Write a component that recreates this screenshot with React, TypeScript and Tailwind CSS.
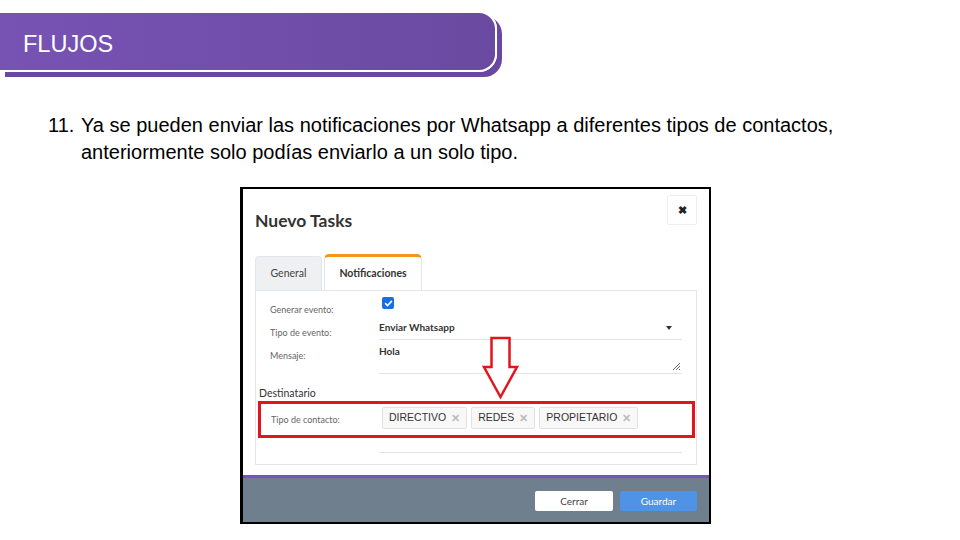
import React from "react";

const modalFont = { fontFamily: "Lato, 'Open Sans', sans-serif" };

function Chip({ label }: { label: string }) {
  return (
    <div className="flex h-[22px] items-center gap-[5px] rounded-[2px] border border-[#e2e2e2] bg-[#f8f8f8] px-[6px] font-['Liberation_Sans',Arial,sans-serif] text-[10.5px] text-[#333]">
      <span>{label}</span>
      <span className="text-[11px] font-bold leading-none text-[#bdbdbd]">✕</span>
    </div>
  );
}

export default function App() {
  return (
    <div className="relative h-[540px] w-[960px] overflow-hidden bg-white">
      {/* Header band */}
      <div className="pt-[11px]">
        <div className="flex h-[61px] w-[497px] items-center rounded-r-[18px] border-y-2 border-r-2 border-white bg-gradient-to-r from-[#7753b4] to-[#6a4aa1] pl-[23px] shadow-[5px_5px_0_#6a48a2]">
          <span className="mt-[7px] font-['Liberation_Sans',Arial,sans-serif] text-[23.5px] leading-none text-white">FLUJOS</span>
        </div>
      </div>

      {/* Numbered text */}
      <div className="mt-[40px] flex pl-[48px] font-['Liberation_Sans',Arial,sans-serif] text-[20px] leading-[27px] text-black">
        <span className="w-[33px] shrink-0">11.</span>
        <span className="w-[820px]">
          Ya se pueden enviar las notificaciones por Whatsapp a diferentes tipos de contactos,
          <br />
          anteriormente solo podías enviarlo a un solo tipo.
        </span>
      </div>

      {/* Modal screenshot */}
      <div
        className="ml-[240px] mt-[21px] flex h-[337px] w-[471px] flex-col border-2 border-l-[3px] border-black bg-white"
        style={modalFont}
      >
        <div className="flex flex-1 flex-col pl-[12px] pr-[12px]">
          {/* Header */}
          <div className="flex h-[36px] items-start justify-between pt-[6px]">
            <div className="mt-[14px] text-[17.5px] font-bold leading-[24px] text-[#333]">Nuevo Tasks</div>
            <div className="flex h-[30px] w-[30px] items-center justify-center rounded-[2px] border border-[#eeeeee] bg-white text-[11px] font-black text-[#222]">
              ✖
            </div>
          </div>

          {/* Tabs */}
          <div className="mt-[29px] flex items-end">
            <div className="flex h-[34px] w-[67px] items-center justify-center rounded-t-[4px] border border-b-0 border-[#e3e6ea] bg-[#eef0f2] text-[10.5px] text-[#444]">
              General
            </div>
            <div className="ml-[2px] flex h-[36px] w-[98px] items-center justify-center rounded-t-[5px] border-x border-t-[3px] border-[#e3e6ea] border-t-[#f7941e] bg-white text-[10.5px] font-bold text-[#333]">
              Notificaciones
            </div>
          </div>

          {/* Panel */}
          <div className="flex h-[175px] flex-col border border-[#e3e6ea]">
            {/* Row A */}
            <div className="flex h-[24px]">
              <div className="mt-[13px] w-[123px] pl-[14px] text-[9px] leading-[12px] text-[#666]">Generar evento:</div>
              <div className="mt-[6px] pl-[3px]">
                <div className="flex h-[12px] w-[12px] items-center justify-center rounded-[2px] bg-[#1a6fe0]">
                  <svg width="9" height="9" viewBox="0 0 10 10">
                    <path d="M1.8 5.2 L4 7.3 L8.3 2.6" fill="none" stroke="white" strokeWidth="1.8" strokeLinecap="round" strokeLinejoin="round" />
                  </svg>
                </div>
              </div>
            </div>
            {/* Row B */}
            <div className="flex h-[25px]">
              <div className="mt-[12px] w-[123px] pl-[14px] text-[9px] leading-[12px] text-[#666]">Tipo de evento:</div>
              <div className="relative flex h-[25px] w-[303px] items-start border-b border-[#e3e3e3] pt-[5px] text-[10px] font-bold leading-[14px] text-[#333]">
                Enviar Whatsapp
                <span className="absolute right-[10px] top-[11px] h-0 w-0 border-x-[3.5px] border-t-[4px] border-x-transparent border-t-[#333]" />
              </div>
            </div>
            {/* Row C */}
            <div className="flex h-[34px]">
              <div className="mt-[10px] w-[123px] pl-[14px] text-[9px] leading-[12px] text-[#666]">Mensaje:</div>
              <div className="relative h-[34px] w-[303px] border-b border-[#e3e3e3] pt-[4px] text-[10px] font-bold leading-[14px] text-[#333]">
                Hola
                <svg className="absolute bottom-[2px] right-[1px]" width="10" height="10" viewBox="0 0 10 10">
                  <path d="M9 2 L2 9 M9 5 L5 9 M9 8 L8 9" stroke="#555" strokeWidth="0.9" />
                </svg>
              </div>
            </div>
            {/* Destinatario */}
            <div className="mt-[12px] pl-[3px] text-[10.5px] leading-[14px] text-[#333]">Destinatario</div>
            {/* Red box */}
            <div className="ml-[2px] mt-[1px] flex h-[37px] w-[437px] items-start border-[3px] border-[#e2151d]">
              <div className="mt-[10px] w-[121px] pl-[10px] text-[9px] leading-[12px] text-[#666]">Tipo de contacto:</div>
              <div className="mt-[3px] flex gap-[4px]">
                <Chip label="DIRECTIVO" />
                <Chip label="REDES" />
                <Chip label="PROPIETARIO" />
              </div>
            </div>
            <div className="ml-[123px] mt-[14px] w-[303px] border-b border-[#e3e3e3]" />
          </div>
        </div>

        {/* Footer */}
        <div className="mt-[10px] h-[3px] bg-[#7a4fc0]" />
        <div className="flex h-[44px] justify-end gap-[7px] bg-[#6f7f8d] pr-[12px] pt-[13px]">
          <div className="flex h-[20px] w-[78px] items-center justify-center rounded-[2px] bg-white text-[10px] text-[#444]">Cerrar</div>
          <div className="flex h-[20px] w-[77px] items-center justify-center rounded-[2px] bg-[#4f93e6] text-[10px] text-white">Guardar</div>
        </div>
      </div>

      {/* Red arrow overlay */}
      <svg className="absolute left-[480px] top-[334px]" width="42" height="70" viewBox="480 334 42 70">
        <polygon
          points="491.5,338 509.5,338 509.5,367 517,367 500.5,397 484,367 491.5,367"
          fill="white"
          stroke="#e2151d"
          strokeWidth="2.5"
          strokeLinejoin="miter"
        />
      </svg>
    </div>
  );
}
